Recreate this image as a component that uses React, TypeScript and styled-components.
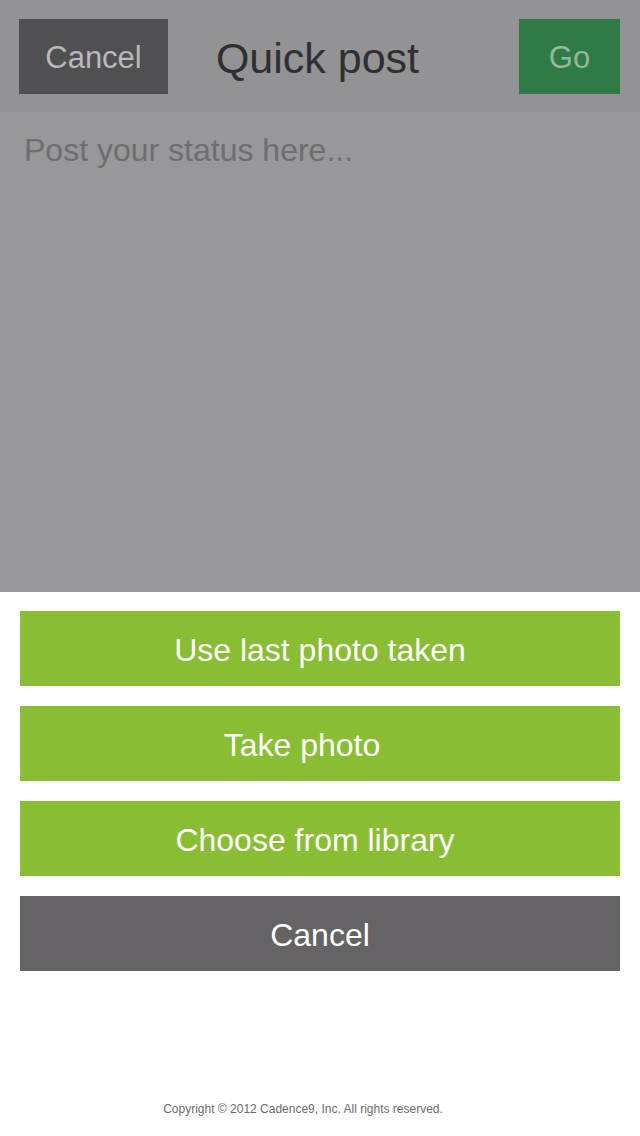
import React from "react";
import styled, { createGlobalStyle } from "styled-components";

const GlobalStyle = createGlobalStyle`
  html, body {
    margin: 0;
    padding: 0;
    background: #ffffff;
  }
  body {
    font-family: "Liberation Sans", Arial, Helvetica, sans-serif;
  }
  * { box-sizing: border-box; }
`;

const Page = styled.div`
  width: 640px;
  height: 1136px;
  display: flex;
  flex-direction: column;
  background: #ffffff;
  overflow: hidden;
`;

const Header = styled.header`
  height: 112px;
  flex: none;
  display: grid;
  grid-template-columns: 1fr auto 1fr;
  align-items: start;
  padding: 19px 20px 0 19px;
  background: #939294;
`;

const HeaderButton = styled.button<{ $tone: "dark" | "green"; $align: "start" | "end" }>`
  justify-self: ${(p) => p.$align};
  height: 75px;
  width: ${(p) => (p.$tone === "dark" ? "149px" : "101px")};
  border: none;
  margin: 0;
  padding: 3px 0 0 0;
  background: ${(p) => (p.$tone === "dark" ? "#504f52" : "#2f7a45")};
  color: ${(p) => (p.$tone === "dark" ? "#b9b8ba" : "#93b89c")};
  font-family: "Liberation Sans", Arial, sans-serif;
  font-size: 31px;
  text-align: center;
`;

const Title = styled.h1`
  margin: 0;
  height: 75px;
  line-height: 75px;
  padding: 2px 4px 0 0;
  font-family: "Liberation Sans", Arial, sans-serif;
  font-weight: 400;
  font-size: 43px;
  color: #302f31;
`;

const StatusArea = styled.textarea`
  height: 480px;
  flex: none;
  width: 100%;
  margin: 0;
  border: none;
  outline: none;
  resize: none;
  background: #98979a;
  padding: 20px 24px;
  font-family: "Liberation Sans", Arial, sans-serif;
  font-size: 32px;
  line-height: 36px;
  color: #302f31;

  &::placeholder {
    color: #6f6d70;
  }
`;

const Sheet = styled.section`
  flex: 1;
  display: flex;
  flex-direction: column;
  padding: 19px 20px 0 20px;
  background: #ffffff;
`;

const Actions = styled.div`
  display: flex;
  flex-direction: column;
  gap: 20px;
`;

const ActionButton = styled.button<{ $variant?: "primary" | "cancel"; $shift?: number }>`
  width: 600px;
  height: 75px;
  margin: 0;
  padding: 4px ${(p) => (p.$shift ?? 0) * 2}px 0 0;
  border: none;
  background: ${(p) => (p.$variant === "cancel" ? "#656366" : "#89bd34")};
  color: #ffffff;
  font-family: "Liberation Sans", Arial, sans-serif;
  font-size: 32px;
  text-align: center;
  cursor: pointer;
`;

const Footer = styled.footer`
  margin-top: auto;
  height: 34px;
  display: flex;
  justify-content: center;
  padding-right: 34px;
  font-family: "Liberation Sans", Arial, sans-serif;
  font-size: 12px;
  color: #6b6a6c;
`;

export default function App() {
  return (
    <>
      <GlobalStyle />
      <Page>
        <Header>
          <HeaderButton $tone="dark" $align="start">Cancel</HeaderButton>
          <Title>Quick post</Title>
          <HeaderButton $tone="green" $align="end">Go</HeaderButton>
        </Header>
        <StatusArea placeholder="Post your status here..." />
        <Sheet>
          <Actions>
            <ActionButton>Use last photo taken</ActionButton>
            <ActionButton $shift={18}>Take photo</ActionButton>
            <ActionButton $shift={5}>Choose from library</ActionButton>
            <ActionButton $variant="cancel">Cancel</ActionButton>
          </Actions>
          <Footer>Copyright © 2012 Cadence9, Inc. All rights reserved.</Footer>
        </Sheet>
      </Page>
    </>
  );
}
